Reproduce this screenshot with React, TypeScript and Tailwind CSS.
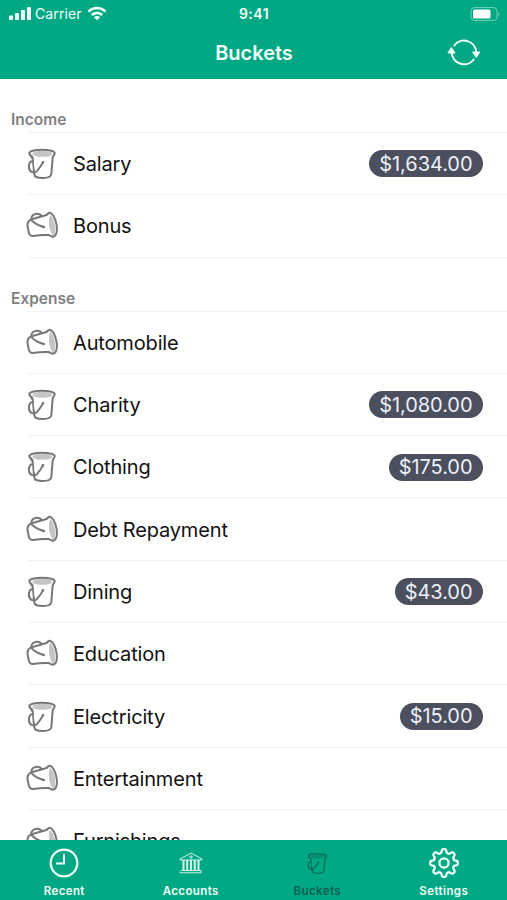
import type { ReactNode } from 'react';

type Item = { name: string; amount?: string };

const income: Item[] = [{ name: 'Salary', amount: '$1,634.00' }, { name: 'Bonus' }];

const expense: Item[] = [
  { name: 'Automobile' },
  { name: 'Charity', amount: '$1,080.00' },
  { name: 'Clothing', amount: '$175.00' },
  { name: 'Debt Repayment' },
  { name: 'Dining', amount: '$43.00' },
  { name: 'Education' },
  { name: 'Electricity', amount: '$15.00' },
  { name: 'Entertainment' },
  { name: 'Furnishings' },
];

function FullBucket({ className, stroke = '#777777', fill = '#c4c4c4' }: { className: string; stroke?: string; fill?: string }) {
  return (
    <svg viewBox="82 144 90 96" className={className} fill="none" stroke={stroke} strokeWidth="6" strokeLinecap="round" strokeLinejoin="round">
      <ellipse cx="128" cy="161.500" rx="30" ry="9" fill={fill} stroke="none" />
      <path d="M89 161C87 153 106 149.500 127 149.500S167 153 165 161C164 166 159.500 167 159 173L155 222C154 238 105 238 104 223L102.500 210M99 176L98 171C97 167 90 166 89 161Z" />
      <path d="M130 187C125 197 118 206 111 214C104 221 90 217 88 204C86 191 92 183 100 183" />
      <path d="M99 176L102 211" strokeWidth="5" />
      <circle cx="130" cy="187" r="2" fill={stroke} strokeWidth="4" />
    </svg>
  );
}

function EmptyBucket() {
  return (
    <svg viewBox="78 46 99 90" className="h-[30px] w-[33px]" fill="none" stroke="#777777" strokeWidth="6" strokeLinecap="round" strokeLinejoin="round">
      <path d="M150 60C143 80 148 112 160 124C169 111 168 76 150 60Z" fill="#c4c4c4" stroke="none" />
      <path d="M94 74C83 78 80 86 84 102C87 119 89 125 99 124C117 121 130 120 145 121C151 122 154 127 160 126C168 123 172 109 170 92C167 72 158 56 150 54C144 53 144 60 137 62L95 74" />
      <path d="M131 97C118 93 105 87 97 79C90 71 96 60 106 58C116 56 122 60 126 64" />
      <circle cx="131" cy="97" r="2" fill="#777777" strokeWidth="4" />
    </svg>
  );
}

function Row({ name, amount }: Item) {
  return (
    <li className="ml-[27px] flex h-[62.3px] items-center border-b border-[#f2f2f2] pr-[24.5px]">
      <span className="flex w-[46px] items-center">
        {amount ? <FullBucket className="mt-px h-8 w-[30px]" /> : <span className="-ml-px -mt-px"><EmptyBucket /></span>}
      </span>
      <span className="flex-1 whitespace-nowrap pt-px text-[20px] leading-6 tracking-[-0.15px] text-[#111111]">{name}</span>
      {amount && (
        <span className="mt-[0.5px] flex h-[27px] items-center rounded-full bg-[#4b4f5e] px-[10px] text-[20px] tracking-[-0.05px] text-[#eef0fa]">{amount}</span>
      )}
    </li>
  );
}

function Section({ title, items, className }: { title: string; items: Item[]; className: string }) {
  return (
    <section>
      <h2 className={`flex items-end pb-[2px] pl-[11px] text-[15.5px] font-semibold leading-5 text-[#808080] ${className}`}>{title}</h2>
      <ul>
        <li className="ml-[27px] h-px bg-[#f2f2f2]" />
        {items.map((item) => (
          <Row key={item.name} {...item} />
        ))}
      </ul>
    </section>
  );
}

function Tab({ label, active, children }: { label: string; active?: boolean; children: ReactNode }) {
  return (
    <button className={`flex flex-1 flex-col items-center pt-[7px] ${active ? 'text-[#04614e]' : 'text-[#effff9]'}`}>
      <span className="flex h-8 items-center justify-center">{children}</span>
      <span className="mt-[5px] text-[11.5px] font-semibold leading-[14px] tracking-[0.4px]">{label}</span>
    </button>
  );
}

function gearPath() {
  const points: string[] = [];
  for (let i = 0; i <= 160; i++) {
    const a = (i / 160) * Math.PI * 2;
    const r = 12.1 + 1.9 * Math.tanh(1.8 * Math.cos(8 * a));
    points.push(`${(16 + r * Math.sin(a)).toFixed(2)} ${(16 - r * Math.cos(a)).toFixed(2)}`);
  }
  return `M${points.join('L')}Z`;
}

export default function App() {
  return (
    <div className="flex h-[900px] w-[507px] flex-col overflow-hidden bg-white font-['Inter','Liberation_Sans',sans-serif]">
      <header className="h-[79px] shrink-0 bg-[#02a783] text-[#effff9]">
        <div className="grid h-[27px] grid-cols-3 items-center pl-[9px] pr-[6px] text-[14px]">
          <div className="flex items-center">
            <svg viewBox="0 0 22 14" className="h-[14px] w-[22px]" fill="currentColor">
              <rect x="0" y="8.500" width="4" height="4.500" rx="1" />
              <rect x="6" y="6" width="4" height="7" rx="1" />
              <rect x="12" y="3" width="4" height="10" rx="1" />
              <rect x="18" y="0" width="4" height="13" rx="1" />
            </svg>
            <span className="ml-[4px] tracking-[0.1px]">Carrier</span>
            <svg viewBox="0 0 20 15" className="ml-[5px] h-[15px] w-5" fill="none" stroke="currentColor" strokeWidth="2.600">
              <path d="M1.500 5.500C6.300.8 13.700.8 18.500 5.500M4.800 9C7.800 6.100 12.200 6.100 15.200 9" />
              <path d="M10 14.300L6.900 11.200C8.700 9.500 11.300 9.500 13.100 11.200Z" fill="currentColor" stroke="none" />
            </svg>
          </div>
          <div className="pr-[2px] text-center text-[14px] font-semibold tracking-[0.5px]">9:41</div>
          <svg viewBox="0 0 31 14" className="h-[14px] w-[31px] justify-self-end">
            <rect x="1" y=".6" width="26" height="12.800" rx="3.500" fill="none" stroke="#76d1bb" />
            <rect x="3" y="2.500" width="17.500" height="9" rx="1.500" fill="white" />
            <path d="M28.500 4.800Q30.500 7 28.500 9.200Z" fill="#76d1bb" />
          </svg>
        </div>
        <div className="grid h-[52px] grid-cols-[60px_1fr_60px] items-center">
          <span />
          <h1 className="pl-px text-center text-[20px] font-semibold leading-[50px]">Buckets</h1>
          <svg viewBox="0 0 34 30" className="h-[30px] w-[34px]" fill="none" stroke="currentColor" strokeWidth="2" strokeLinecap="round">
            <path d="M7.300 7.500C13.500-1 29 1.500 29.500 16M26.700 21.500C20.500 30 5 27 4.500 13" />
            <path d="M25.900 14H32.700L29.500 19.300ZM1.300 15H8.100L4.500 9.700Z" fill="currentColor" strokeWidth="1" strokeLinejoin="round" />
          </svg>
        </div>
      </header>
      <main className="min-h-0 flex-1 overflow-hidden">
        <Section title="Income" items={income} className="h-[53px]" />
        <Section title="Expense" items={expense} className="h-[53px]" />
      </main>
      <nav className="flex h-[60px] shrink-0 bg-[#02a783] pl-px">
        <Tab label="Recent">
          <svg viewBox="0 0 30 30" className="h-[30px] w-[30px]" fill="none" stroke="currentColor" strokeWidth="2.200">
            <circle cx="15" cy="15" r="13.300" />
            <path d="M15 6V15.500H7" strokeWidth="2" />
          </svg>
        </Tab>
        <Tab label="Accounts">
          <svg viewBox="0 0 24 22" className="h-[22px] w-6" fill="none" stroke="currentColor" strokeOpacity=".85">
            <path d="M1 7L12 1.100L23 7V8H1ZM2 18.500H22V20.800H1V19.500" />
            <circle cx="12" cy="5" r="1.200" />
            <path d="M4.500 8V18M8.200 8V18M12 8V18M15.800 8V18M19.500 8V18" strokeWidth="2.100" />
          </svg>
        </Tab>
        <Tab label="Buckets" active>
          <FullBucket className="h-[23px] w-[21px]" stroke="#05705a" fill="#058d70" />
        </Tab>
        <Tab label="Settings">
          <svg viewBox="0 0 32 32" className="h-8 w-8" fill="none" stroke="currentColor" strokeWidth="2.300" strokeLinejoin="round">
            <path d={gearPath()} />
            <circle cx="16" cy="16" r="4.600" />
          </svg>
        </Tab>
      </nav>
    </div>
  );
}
